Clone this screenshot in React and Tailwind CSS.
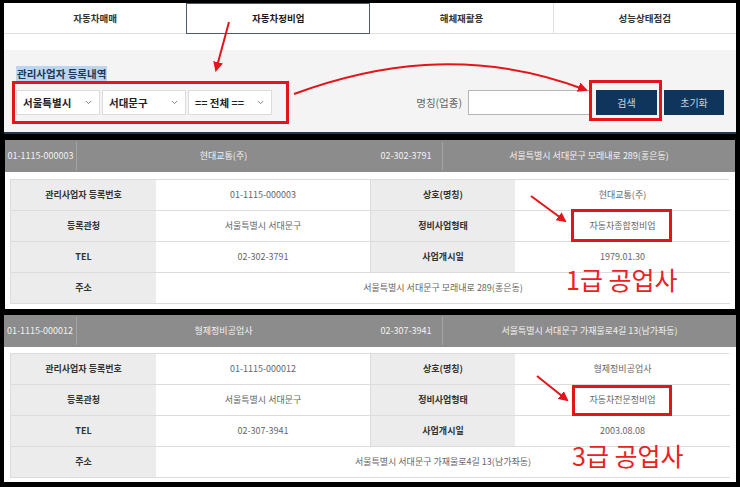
import React from 'react';
import { ChevronDown } from 'lucide-react';

const tabs = ['자동차매매', '자동차정비업', '해체재활용', '성능상태점검'];

const records = [
  {
    id: '01-1115-000003',
    name: '현대교통(주)',
    tel: '02-302-3791',
    addr: '서울특별시 서대문구 모래내로 289(홍은동)',
    type: '자동차종합정비업',
    opened: '1979.01.30',
  },
  {
    id: '01-1115-000012',
    name: '형제정비공업사',
    tel: '02-307-3941',
    addr: '서울특별시 서대문구 가재울로4길 13(남가좌동)',
    type: '자동차전문정비업',
    opened: '2003.08.08',
  },
];

const Select = ({ label }) => (
  <div className="w-[84px] h-[25px] bg-white border border-[#dcdcdc] flex items-center justify-between pl-[6px] pr-[6px]">
    <span className="text-[10.5px] font-semibold text-[#222]">{label}</span>
    <ChevronDown size={9} strokeWidth={2.5} className="text-[#777]" />
  </div>
);

const Label = ({ children }) => (
  <div className="bg-[#ececec] flex items-center justify-center font-bold text-[#333] border-b border-[#dcdcdc]">{children}</div>
);

const Value = ({ children, className = '' }) => (
  <div className={`bg-white flex items-center justify-center text-[#666] border-b border-[#dcdcdc] ${className}`}>{children}</div>
);

const Record = ({ r, first }) => (
  <div className={`bg-white flex flex-col ${first ? 'mx-[5px] h-[169px]' : 'mx-[4px] h-[167px]'}`}>
    <div className="h-[32px] bg-[#8c8c8c] flex text-[9px] text-[#f2f2f2]">
      <div className={`${first ? 'w-[72px]' : 'w-[73px]'} flex items-center justify-center border-r border-[#a4a4a4] my-[2px]`}>{r.id}</div>
      <div className="w-[293px] flex items-center justify-center">{r.name}</div>
      <div className="w-[73px] flex items-center justify-center border-r border-[#a4a4a4] my-[2px]">{r.tel}</div>
      <div className="flex-1 flex items-center justify-center">{r.addr}</div>
    </div>
    <div className={first ? 'pt-[7px] pl-[5px] pr-[6px]' : 'pt-[6px] pl-[6px] pr-[7px]'}>
      <div className="grid grid-cols-[145px_215px_144px_215px] auto-rows-[31px] border border-[#dcdcdc] border-b-0 text-[9px]">
        <Label>관리사업자 등록번호</Label>
        <Value className="border-r">{r.id}</Value>
        <Label>상호(명칭)</Label>
        <Value>{r.name}</Value>
        <Label>등록관청</Label>
        <Value className="border-r">서울특별시 서대문구</Value>
        <Label>정비사업형태</Label>
        <Value>{r.type}</Value>
        <Label>TEL</Label>
        <Value className="border-r">{r.tel}</Value>
        <Label>사업개시일</Label>
        <Value>{r.opened}</Value>
        <Label>주소</Label>
        <Value className="col-span-3">{r.addr}</Value>
      </div>
    </div>
  </div>
);

export default function App() {
  return (
    <div className="relative w-[740px] h-[487px] bg-black overflow-hidden font-['Noto_Sans_CJK_KR','Noto_Sans',sans-serif]">
      <div className="flex flex-col pt-[3px]">
        <div className="mx-[4px] h-[131px] bg-white flex flex-col">
          <div className="h-[31px] flex text-[9.5px] font-bold text-[#333]">
            {tabs.map((t, i) =>
              i === 1 ? (
                <div key={t} className="w-[184px] border border-[#4e5b69] flex items-center justify-center text-[#1a1a1a]">{t}</div>
              ) : (
                <div key={t} className={`flex-1 border-b border-[#e0e0e0] flex items-center justify-center ${i === 3 ? 'border-l' : ''}`}>{t}</div>
              )
            )}
          </div>
          <div className="h-[16px]" />
          <div className="flex-1 bg-[#f4f4f4] px-[12px] pt-[17px] flex flex-col">
            <div className="h-[14px] leading-[14px] text-[10.5px] font-bold text-[#1f3658]">
              <span className="bg-[#bcd6f0] px-[1px]">관리사업자 등록내역</span>
            </div>
            <div className="mt-[9px] h-[25px] flex items-center justify-between">
              <div className="flex gap-[2px]">
                <Select label="서울특별시" />
                <Select label="서대문구" />
                <Select label="== 전체 ==" />
              </div>
              <div className="flex items-center">
                <span className="text-[10.5px] text-[#666] mr-[6px]">명칭(업종)</span>
                <div className="w-[122px] h-[25px] bg-white border border-[#b5b5b5]" />
                <button className="ml-[6px] w-[61px] h-[25px] bg-[#0f355c] text-[10px] text-[#c9d3df]">검색</button>
                <button className="ml-[7px] w-[60px] h-[25px] bg-[#0f355c] text-[10px] text-[#c9d3df]">초기화</button>
              </div>
            </div>
          </div>
          <div className="h-[2px] bg-[#24394f]" />
        </div>
        <div className="h-[6px]" />
        <Record r={records[0]} first />
        <div className="h-[6px]" />
        <Record r={records[1]} />
      </div>

      <div className="absolute left-[12px] top-[81px] w-[277px] h-[43px] border-[3px] border-[#e3151a]" />
      <div className="absolute left-[589px] top-[80px] w-[73px] h-[41px] border-[3px] border-[#e3151a]" />
      <div className="absolute left-[571px] top-[209px] w-[101px] h-[33px] border-[3px] border-[#e3151a]" />
      <div className="absolute left-[572px] top-[385px] w-[100px] h-[31px] border-[3px] border-[#e3151a]" />
      <div className="absolute left-[566px] top-[266px] text-[25px] leading-[26px] text-[#e8231f]">1급 공업사</div>
      <div className="absolute left-[572px] top-[442px] text-[25px] leading-[26px] text-[#e8231f]">3급 공업사</div>

      <svg className="absolute inset-0 pointer-events-none" width="740" height="487" viewBox="0 0 740 487">
        <defs>
          <marker id="head" viewBox="0 0 10 10" refX="8" refY="5" markerWidth="5" markerHeight="5" orient="auto">
            <path d="M0 0 L10 5 L0 10 Z" fill="#e3151a" />
          </marker>
        </defs>
        <g stroke="#e3151a" strokeWidth="2" fill="none" markerEnd="url(#head)">
          <line x1="229" y1="22" x2="216" y2="70" />
          <path d="M294 94 C 370 66, 470 46, 586 90" />
          <line x1="531" y1="196" x2="565" y2="221" />
          <line x1="537" y1="376" x2="567" y2="400" />
        </g>
      </svg>
    </div>
  );
}
